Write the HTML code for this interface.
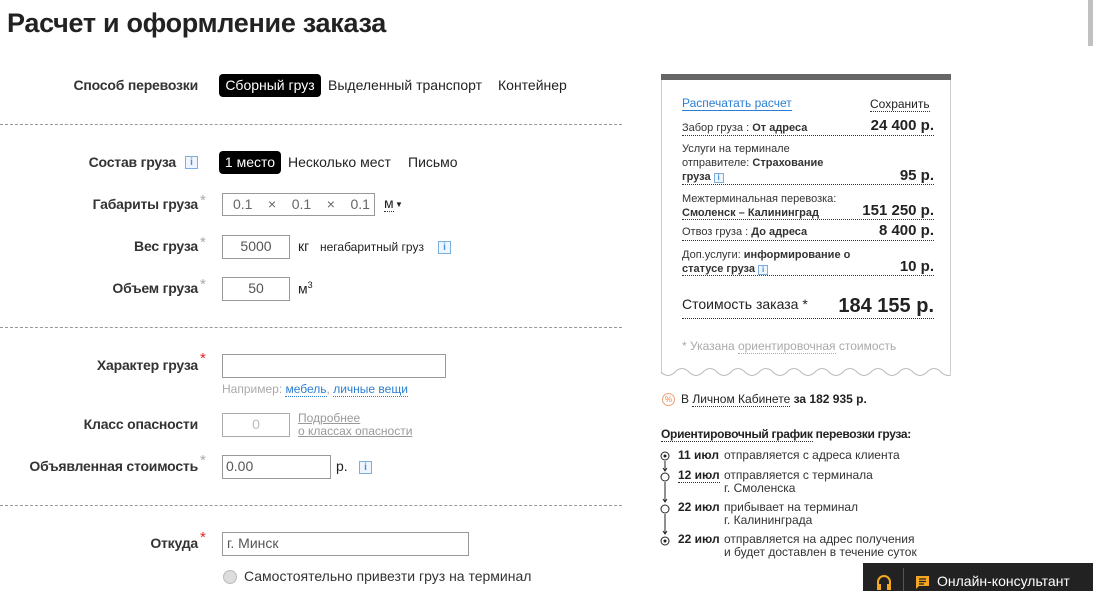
<!DOCTYPE html>
<html><head><meta charset="utf-8"><style>
*{margin:0;padding:0;box-sizing:border-box}
body{width:1093px;height:591px;overflow:hidden;background:#fff;font-family:"Liberation Sans",sans-serif;color:#222;position:relative}
.a{position:absolute;white-space:nowrap}
.lb{font-weight:bold;font-size:14px;text-align:right;color:#333;letter-spacing:-0.2px}
.st{position:absolute;color:#aaa;font-size:15px}
.rs{color:#e22}
.in{position:absolute;border:1px solid #999;background:#fff;font-size:14px;color:#555;text-align:center;line-height:21px}
.dash{position:absolute;left:0;width:622px;border-top:1px dashed #999}
.i{position:absolute;width:13px;height:13px;border:1px solid #7ab0e0;color:#4a90d9;font-size:10px;font-weight:bold;text-align:center;line-height:11px;background:#eef5fc}
.pill{position:absolute;background:#000;color:#fff;border-radius:4px;font-size:14px;text-align:center;line-height:23px}
.t14{font-size:14px}
.r{font-size:11px;color:#333}
.row{position:absolute;left:682px;width:252px;border-bottom:1px dotted #333}
.pr{position:absolute;right:0;bottom:1px;font-size:15px;font-weight:bold;color:#222}
</style></head><body>
<div style="position:absolute;left:1088px;top:0;width:5px;height:46px;background:#c1c1c1"></div>
<div class="a" style="left:7px;top:8px;font-size:27px;font-weight:bold;color:#222;letter-spacing:-0.3px">Расчет и оформление заказа</div>

<div class="a lb" style="right:895px;top:77px">Способ перевозки</div>
<div class="pill" style="left:219px;top:74px;width:102px">Сборный груз</div>
<div class="a t14" style="left:328px;top:77px">Выделенный транспорт</div>
<div class="a t14" style="left:498px;top:77px">Контейнер</div>
<div class="dash" style="top:124px"></div>

<div class="a lb" style="right:917px;top:154px">Состав груза</div>
<div class="i" style="left:185px;top:156px">i</div>
<div class="pill" style="left:219px;top:151px;width:62px">1 место</div>
<div class="a t14" style="left:288px;top:154px">Несколько мест</div>
<div class="a t14" style="left:408px;top:154px">Письмо</div>

<div class="a lb" style="right:895px;top:196px">Габариты груза</div><div class="st" style="left:200px;top:192px">*</div>
<div class="in" style="left:222px;top:193px;width:153px;height:23px;text-align:left;padding-left:10px;color:#666">0.1&nbsp;&nbsp;&nbsp;&nbsp;×&nbsp;&nbsp;&nbsp;&nbsp;0.1&nbsp;&nbsp;&nbsp;&nbsp;×&nbsp;&nbsp;&nbsp;&nbsp;0.1</div>
<div class="a t14" style="left:384px;top:196px;border-bottom:1px dotted #333;line-height:15px">м</div><div class="a" style="left:395px;top:200px;font-size:8px">▼</div>

<div class="a lb" style="right:895px;top:238px">Вес груза</div><div class="st" style="left:200px;top:234px">*</div>
<div class="in" style="left:222px;top:235px;width:68px;height:24px">5000</div>
<div class="a t14" style="left:298px;top:238px">кг</div>
<div class="a" style="left:320px;top:240px;font-size:12px">негабаритный груз</div>
<div class="i" style="left:438px;top:241px">i</div>

<div class="a lb" style="right:895px;top:280px">Объем груза</div><div class="st" style="left:200px;top:276px">*</div>
<div class="in" style="left:222px;top:277px;width:68px;height:24px">50</div>
<div class="a t14" style="left:298px;top:280px">м<sup style="font-size:9px">3</sup></div>
<div class="dash" style="top:327px"></div>

<div class="a lb" style="right:895px;top:357px">Характер груза</div><div class="st rs" style="left:200px;top:350px">*</div>
<div class="in" style="left:222px;top:354px;width:224px;height:24px"></div>
<div class="a" style="left:222px;top:382px;font-size:12px;color:#aaa">Например: <span style="color:#2a7fd4;border-bottom:1px dotted #2a7fd4">мебель</span>, <span style="color:#2a7fd4;border-bottom:1px dotted #2a7fd4">личные вещи</span></div>

<div class="a lb" style="right:895px;top:416px">Класс опасности</div>
<div class="in" style="left:222px;top:413px;width:68px;height:24px;border-color:#aaa;color:#bbb">0</div>
<div class="a" style="left:298px;top:412px;font-size:12px;color:#999;line-height:13px;text-decoration:underline">Подробнее<br>о классах опасности</div>

<div class="a lb" style="right:895px;top:458px">Объявленная стоимость</div><div class="st" style="left:200px;top:452px">*</div>
<div class="in" style="left:222px;top:455px;width:109px;height:24px;text-align:left;padding-left:3px">0.00</div>
<div class="a t14" style="left:336px;top:458px">р.</div>
<div class="i" style="left:359px;top:461px">i</div>
<div class="dash" style="top:505px"></div>

<div class="a lb" style="right:895px;top:535px">Откуда</div><div class="st rs" style="left:200px;top:529px">*</div>
<div class="in" style="left:222px;top:532px;width:247px;height:24px;text-align:left;padding-left:4px">г. Минск</div>
<div style="position:absolute;left:223px;top:570px;width:14px;height:14px;border-radius:50%;background:#ddd;border:1px solid #bbb"></div>
<div class="a t14" style="left:244px;top:568px;color:#333">Самостоятельно привезти груз на терминал</div>

<div style="position:absolute;left:661px;top:74px;width:290px;height:300px;border-left:1px solid #ccc;border-right:1px solid #ccc"></div>
<div style="position:absolute;left:661px;top:74px;width:290px;height:6px;background:#666"></div>
<svg style="position:absolute;left:661px;top:366px" width="290" height="14"><path d="M0 6 Q7 13 14 6 T28 6 T42 6 T56 6 T70 6 T84 6 T98 6 T112 6 T126 6 T140 6 T154 6 T168 6 T182 6 T196 6 T210 6 T224 6 T238 6 T252 6 T266 6 T280 6 T294 6" fill="none" stroke="#bbb"/></svg>
<div class="a" style="left:682px;top:96px;font-size:12px;color:#2a7fd4;border-bottom:1px solid #2a7fd4">Распечатать расчет</div>
<div class="a" style="left:870px;top:97px;font-size:12px;border-bottom:1px dotted #333">Сохранить</div>

<div class="row r" style="top:120px;height:16px;line-height:16px">Забор груза : <b>От адреса</b><span class="pr">24 400 р.</span></div>
<div class="row r" style="top:142px;height:43px;line-height:14px">Услуги на терминале<br>отправителе: <b>Страхование<br>груза</b> <span class="i" style="position:relative;display:inline-block;width:10px;height:10px;font-size:8px;line-height:8px">i</span><span class="pr">95 р.</span></div>
<div class="row r" style="top:192px;height:28px;line-height:14px">Межтерминальная перевозка:<br><b>Смоленск – Калининград</b><span class="pr">151 250 р.</span></div>
<div class="row r" style="top:226px;height:15px">Отвоз груза : <b>До адреса</b><span class="pr">8 400 р.</span></div>
<div class="row r" style="top:248px;height:28px;line-height:14px">Доп.услуги: <b>информирование о<br>статусе груза</b> <span class="i" style="position:relative;display:inline-block;width:10px;height:10px;font-size:8px;line-height:8px">i</span><span class="pr">10 р.</span></div>
<div class="row" style="top:296px;height:23px;font-size:14px">Стоимость заказа *<span class="pr" style="font-size:20px;bottom:0">184 155 р.</span></div>
<div class="a" style="left:682px;top:339px;font-size:12px;color:#aaa">* Указана <span style="border-bottom:1px dotted #aaa">ориентировочная</span> стоимость</div>

<div style="position:absolute;left:662px;top:393px;width:13px;height:13px;border-radius:50%;border:1px solid #f5a070;color:#f08040;font-size:8px;text-align:center;line-height:11px">%</div>
<div class="a" style="left:681px;top:392px;font-size:12px">В <span style="border-bottom:1px dotted #333">Личном Кабинете</span> <b>за 182 935 р.</b></div>
<div class="a" style="left:661px;top:427px;font-size:12px;font-weight:bold;letter-spacing:-0.3px"><span style="border-bottom:1px dotted #333">Ориентировочный график</span> перевозки груза:</div>

<svg style="position:absolute;left:659px;top:449px" width="14" height="100"><g fill="none" stroke="#222"><circle cx="6" cy="7" r="4"/><circle cx="6" cy="28" r="4"/><circle cx="6" cy="60" r="4"/><circle cx="6" cy="92" r="4"/><path d="M6 12v10M4 19l2 3 2-3M6 33v20M4 50l2 3 2-3M6 65v20M4 82l2 3 2-3"/></g><circle cx="6" cy="7" r="1.5" fill="#222"/><circle cx="6" cy="92" r="1.5" fill="#222"/></svg>
<div class="a" style="left:678px;top:449px;font-size:12px;line-height:13px"><b>11 июл</b></div>
<div class="a" style="left:724px;top:449px;font-size:12px;line-height:13px;color:#333">отправляется с адреса клиента</div>
<div class="a" style="left:678px;top:469px;font-size:12px;line-height:13px"><b style="border-bottom:1px dotted #333">12 июл</b></div>
<div class="a" style="left:724px;top:469px;font-size:12px;line-height:13px;color:#333">отправляется с терминала<br>г. Смоленска</div>
<div class="a" style="left:678px;top:501px;font-size:12px;line-height:13px"><b>22 июл</b></div>
<div class="a" style="left:724px;top:501px;font-size:12px;line-height:13px;color:#333">прибывает на терминал<br>г. Калининграда</div>
<div class="a" style="left:678px;top:533px;font-size:12px;line-height:13px"><b>22 июл</b></div>
<div class="a" style="left:724px;top:533px;font-size:12px;line-height:13px;color:#333">отправляется на адрес получения<br>и будет доставлен в течение суток</div>

<div style="position:absolute;left:863px;top:563px;width:230px;height:28px;background:#222"></div>
<svg style="position:absolute;left:876px;top:574px" width="16" height="17"><path d="M2 12V8a6 6 0 0 1 12 0v4" fill="none" stroke="#f5a623" stroke-width="2"/><rect x="1" y="10" width="4" height="6" fill="#f5a623"/><rect x="11" y="10" width="4" height="6" fill="#f5a623"/></svg>
<div style="position:absolute;left:903px;top:568px;width:1px;height:23px;background:#555"></div>
<svg style="position:absolute;left:915px;top:575px" width="15" height="15"><path d="M1 1h13v10H4l-3 3z" fill="#f5a623"/><path d="M4 4h7M4 6.5h7M4 9h5" stroke="#222" stroke-width="1.2"/></svg>
<div class="a" style="left:937px;top:573px;font-size:14px;color:#fff">Онлайн-консультант</div>
</body></html>
